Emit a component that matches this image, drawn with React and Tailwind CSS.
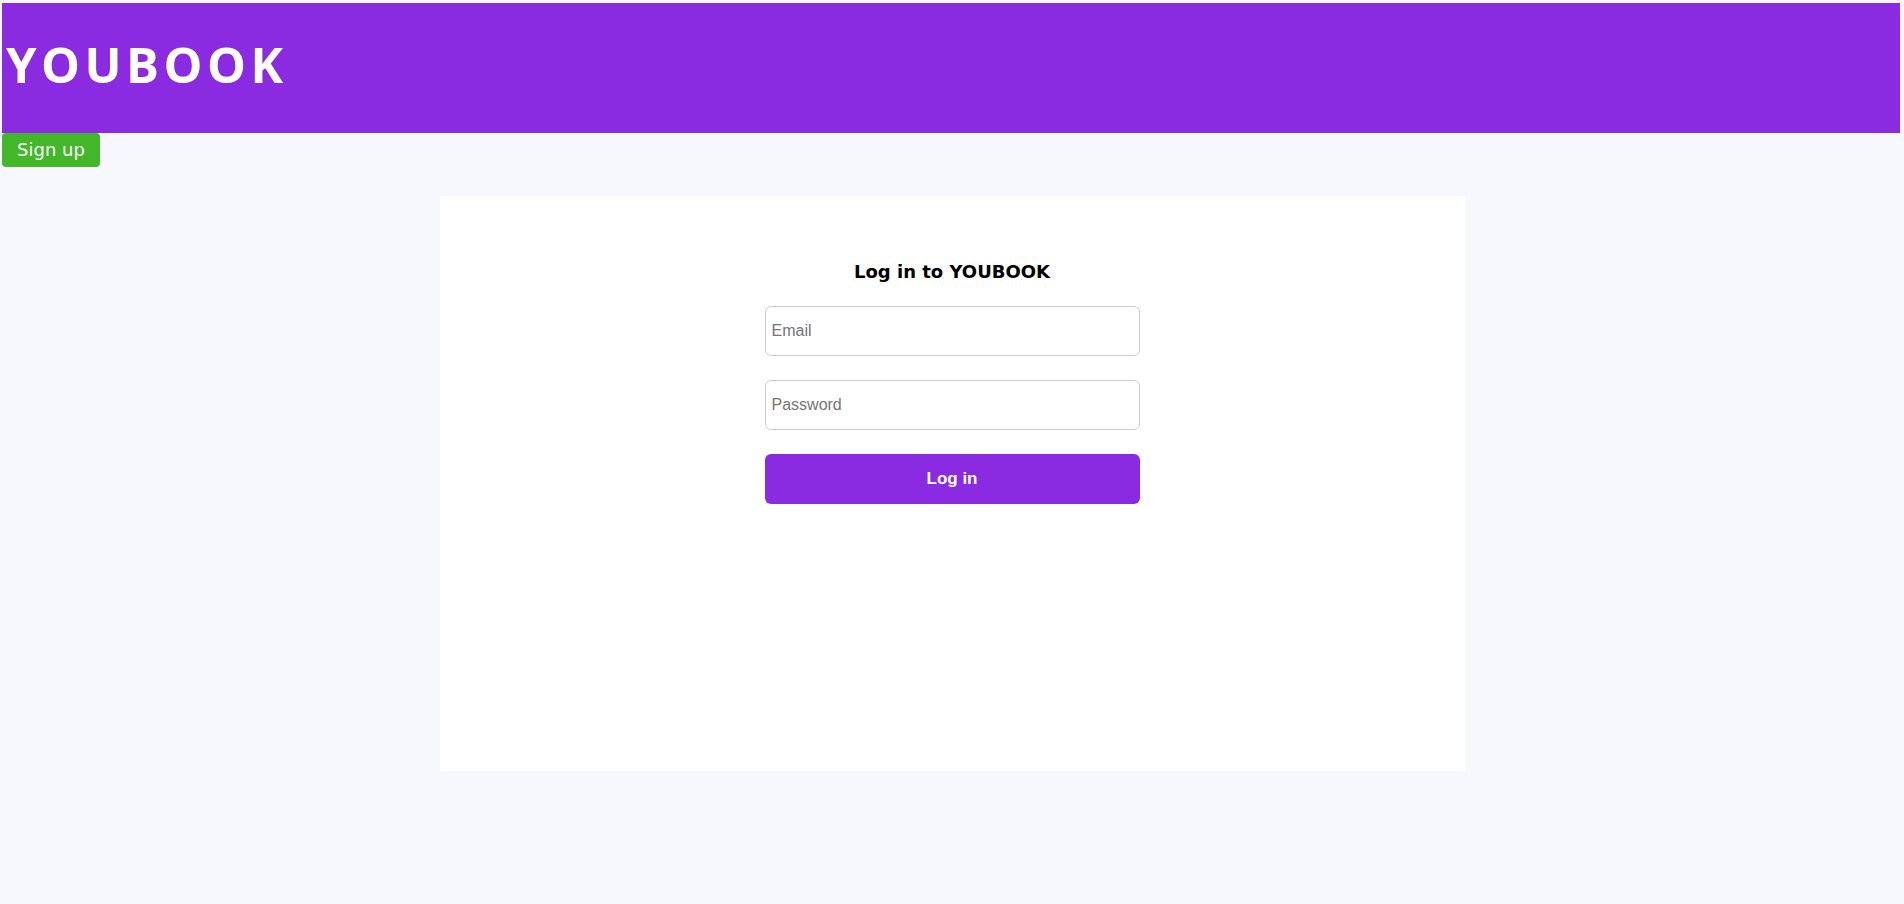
import React, { useState } from 'react';

const App = () => {
  const [email, setEmail] = useState('');
  const [password, setPassword] = useState('');

  return (
    <div className="min-h-screen bg-[#f7f8fd] pt-[3px] font-['DejaVu_Sans',Verdana,sans-serif]">
      <header className="mx-[2px] w-[1898px] h-[130px] bg-[#8a2be2] flex items-center">
        <h1 className="ml-[4px] mb-[7px] text-white font-bold text-[49px] leading-none tracking-[4.5px] font-['Open_Sans',sans-serif]">YOUBOOK</h1>
      </header>
      <button className="ml-[2px] w-[98px] h-[34px] bg-[#42b72a] text-white rounded-[4px] text-[18px] leading-none">
        Sign up
      </button>

      <div className="mt-[29px] mx-auto w-[1025px] h-[575px] bg-white pt-[64px]">
        <form className="w-[375px] mx-auto flex flex-col" onSubmit={(e) => e.preventDefault()}>
          <h2 className="text-center text-[18px] leading-[24px] font-bold text-black mb-[22px]">
            Log in to YOUBOOK
          </h2>
          <input
            type="email"
            placeholder="Email"
            value={email}
            onChange={(e) => setEmail(e.target.value)}
            className="h-[50px] border border-[#ccc] rounded-[6px] px-[6px] text-[16px] outline-none placeholder:text-[#757575] font-['Liberation_Sans',Arial,sans-serif] mb-[24px]"
          />
          <input
            type="password"
            placeholder="Password"
            value={password}
            onChange={(e) => setPassword(e.target.value)}
            className="h-[50px] border border-[#ccc] rounded-[6px] px-[6px] text-[16px] outline-none placeholder:text-[#757575] font-['Liberation_Sans',Arial,sans-serif] mb-[24px]"
          />
          <button
            type="submit"
            className="h-[50px] bg-[#8a2be2] text-white rounded-[6px] text-[17px] font-bold font-['Liberation_Sans',Arial,sans-serif]"
          >
            Log in
          </button>
        </form>
      </div>
    </div>
  );
};

export default App;
